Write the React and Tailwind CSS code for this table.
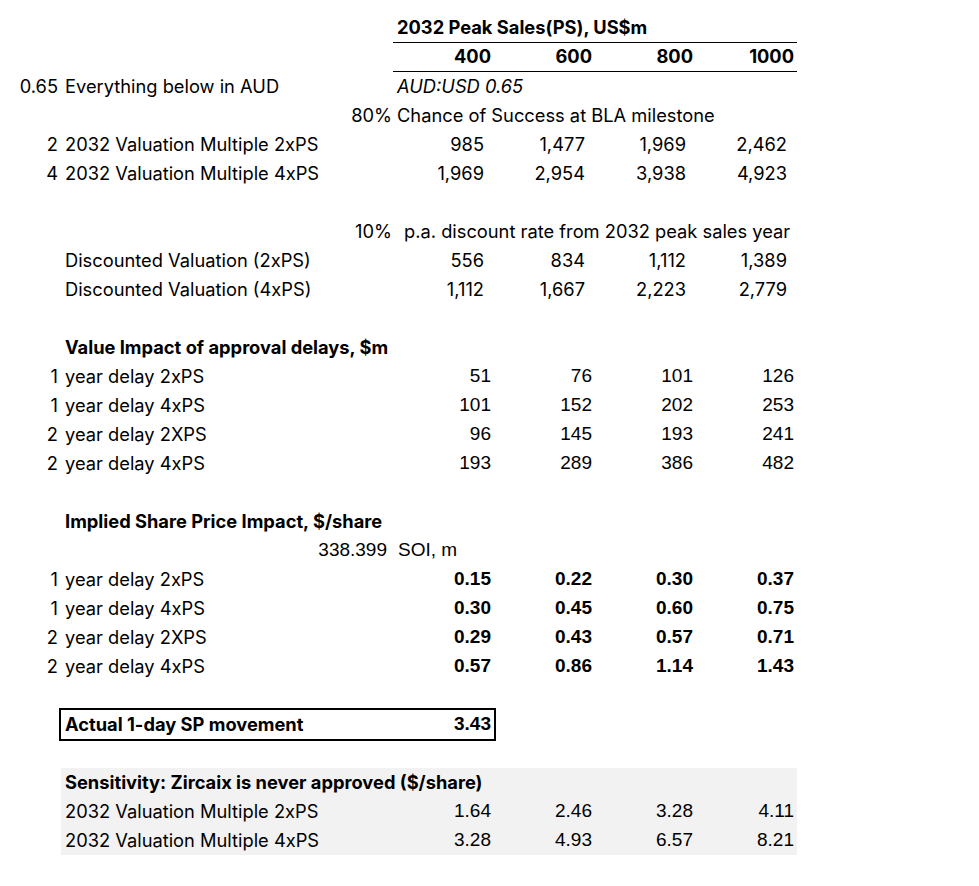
const aptos = "font-['Inter',sans-serif] text-[18.3px]"
const arial = "font-['Liberation_Sans',Arial,sans-serif] text-[19px]"

const grid = 'grid grid-cols-[61px_332px_101px_101px_101px_101px] h-[29px] items-center whitespace-nowrap'

function Row({ a, b, bClass = '', vals, valClass = '', bg = '' }) {
	return (
		<div className={`${grid} ${bg}`}>
			<div className={`${aptos} text-right pr-[3px]`}>{a}</div>
			<div className={`${aptos} pl-[4px] ${bClass}`}>{b}</div>
			{vals &&
				vals.map((v, i) => (
					<div key={i} className={`text-right ${valClass}`}>
						{v}
					</div>
				))}
		</div>
	)
}

function Blank() {
	return <div className="h-[29px]" />
}

export default function App() {
	const commaNums = `${aptos} pr-[10px]`
	const plainNums = `${arial} pr-[3px]`
	const boldNums = `${arial} font-bold pr-[3px]`

	return (
		<div className="bg-white text-black w-[979px] h-[886px] pt-[14px]">
			{/* header */}
			<div className={grid}>
				<div />
				<div />
				<div className={`${aptos} font-bold col-span-4 border-b border-black h-full flex items-center pl-[4px]`}>
					2032 Peak Sales(PS), US$m
				</div>
			</div>
			<div className={grid}>
				<div />
				<div />
				{['400', '600', '800', '1000'].map((v) => (
					<div key={v} className={`${aptos} font-bold text-right pr-[3px] border-b border-black h-full flex items-center justify-end`}>
						{v}
					</div>
				))}
			</div>

			<div className={grid}>
				<div className={`${aptos} text-right pr-[3px]`}>0.65</div>
				<div className={`${aptos} pl-[4px]`}>Everything below in AUD</div>
				<div className={`${aptos} italic pl-[4px]`}>AUD:USD 0.65</div>
			</div>
			<div className={grid}>
				<div />
				<div className={`${aptos} text-right pr-[1px]`}>80%</div>
				<div className={`${aptos} pl-[4px]`}>Chance of Success at BLA milestone</div>
			</div>
			<Row a="2" b="2032 Valuation Multiple 2xPS" vals={['985', '1,477', '1,969', '2,462']} valClass={commaNums} />
			<Row a="4" b="2032 Valuation Multiple 4xPS" vals={['1,969', '2,954', '3,938', '4,923']} valClass={commaNums} />
			<Blank />

			<div className={grid}>
				<div />
				<div className={`${aptos} text-right pr-[1px]`}>10%</div>
				<div className={`${aptos} pl-[11px]`}>p.a. discount rate from 2032 peak sales year</div>
			</div>
			<Row b="Discounted Valuation (2xPS)" vals={['556', '834', '1,112', '1,389']} valClass={commaNums} />
			<Row b="Discounted Valuation (4xPS)" vals={['1,112', '1,667', '2,223', '2,779']} valClass={commaNums} />
			<Blank />

			<Row b="Value Impact of approval delays, $m" bClass="font-bold" />
			<Row a="1" b="year delay 2xPS" vals={['51', '76', '101', '126']} valClass={plainNums} />
			<Row a="1" b="year delay 4xPS" vals={['101', '152', '202', '253']} valClass={plainNums} />
			<Row a="2" b="year delay 2XPS" vals={['96', '145', '193', '241']} valClass={plainNums} />
			<Row a="2" b="year delay 4xPS" vals={['193', '289', '386', '482']} valClass={plainNums} />
			<Blank />

			<Row b="Implied Share Price Impact, $/share" bClass="font-bold" />
			<div className={grid}>
				<div />
				<div className={`${arial} text-right pr-[6px]`}>338.399</div>
				<div className={`${arial} pl-[5px]`}>SOI, m</div>
			</div>
			<Row a="1" b="year delay 2xPS" vals={['0.15', '0.22', '0.30', '0.37']} valClass={boldNums} />
			<Row a="1" b="year delay 4xPS" vals={['0.30', '0.45', '0.60', '0.75']} valClass={boldNums} />
			<Row a="2" b="year delay 2XPS" vals={['0.29', '0.43', '0.57', '0.71']} valClass={boldNums} />
			<Row a="2" b="year delay 4xPS" vals={['0.57', '0.86', '1.14', '1.43']} valClass={boldNums} />
			<Blank />

			<div className={grid}>
				<div />
				<div className="col-span-2 h-full flex items-center justify-between outline-2 outline-black">
					<span className={`${aptos} font-bold pl-[4px]`}>Actual 1-day SP movement</span>
					<span className={`${arial} font-bold pr-[3px]`}>3.43</span>
				</div>
			</div>
			<Blank />

			<div className="w-[797px]">
				<div className="ml-[61px] bg-[#f2f2f2]">
					<div className="h-[29px] flex items-center whitespace-nowrap">
						<span className={`${aptos} font-bold pl-[4px]`}>Sensitivity: Zircaix is never approved ($/share)</span>
					</div>
					{[
						['2032 Valuation Multiple 2xPS', ['1.64', '2.46', '3.28', '4.11']],
						['2032 Valuation Multiple 4xPS', ['3.28', '4.93', '6.57', '8.21']],
					].map(([label, vals]) => (
						<div key={label} className="grid grid-cols-[332px_101px_101px_101px_101px] h-[29px] items-center whitespace-nowrap">
							<div className={`${aptos} pl-[4px]`}>{label}</div>
							{vals.map((v, i) => (
								<div key={i} className={`text-right ${plainNums}`}>
									{v}
								</div>
							))}
						</div>
					))}
				</div>
			</div>
		</div>
	)
}
